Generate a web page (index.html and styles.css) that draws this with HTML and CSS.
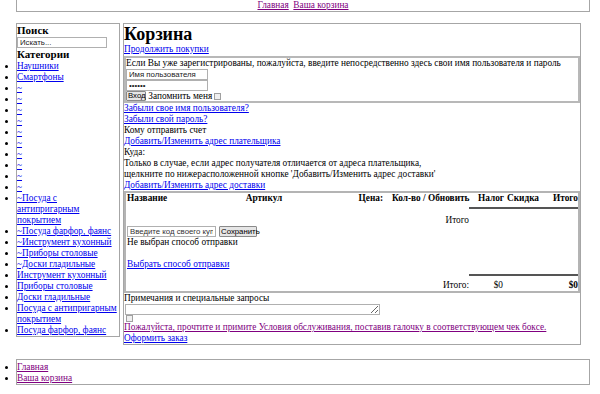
FILE: index.html
```html
<!DOCTYPE html>
<html lang="ru">
<head>
<meta charset="utf-8">
<title>Корзина</title>
<link rel="stylesheet" href="styles.css">
</head>
<body>
<div class="page">
  <div class="topbar"><a class="visited" href="#">Главная</a>&nbsp; <a class="visited" href="#">Ваша корзина</a></div>
  <div class="layout">
    <aside class="sidebar">
      <h3>Поиск</h3>
      <input class="search" type="text" value="Искать...">
      <h3>Категории</h3>
      <ul class="cats">
        <li><a href="#">Наушники</a></li>
        <li><a href="#">Смартфоны</a></li>
        <li><a href="#">~</a></li>
        <li><a href="#">~</a></li>
        <li><a href="#">~</a></li>
        <li><a href="#">~</a></li>
        <li><a href="#">~</a></li>
        <li><a href="#">~</a></li>
        <li><a href="#">~</a></li>
        <li><a href="#">~</a></li>
        <li><a href="#">~</a></li>
        <li><a href="#">~</a></li>
        <li><a href="#">~Посуда с антипригарным покрытием</a></li>
        <li><a href="#">~Посуда фарфор, фаянс</a></li>
        <li><a href="#">~Инструмент кухонный</a></li>
        <li><a href="#">~Приборы столовые</a></li>
        <li><a href="#">~Доски гладильные</a></li>
        <li><a href="#">Инструмент кухонный</a></li>
        <li><a href="#">Приборы столовые</a></li>
        <li><a href="#">Доски гладильные</a></li>
        <li><a href="#">Посуда с антипригарным покрытием</a></li>
        <li><a href="#">Посуда фарфор, фаянс</a></li>
      </ul>
    </aside>
    <main class="content">
      <h1>Корзина</h1>
      <div><a href="#">Продолжить покупки</a></div>
      <div class="login">
        <div>Если Вы уже зарегистрированы, пожалуйста, введите непосредственно здесь свои имя пользователя и пароль</div>
        <input class="field" type="text" value="Имя пользователя">
        <input class="field" type="password" value="123456">
        <div class="login-row"><button class="btn btn-login" type="button">Вход</button> Запомнить меня <input class="chk chk-inline" type="checkbox"></div>
      </div>
      <div><a href="#">Забыли свое имя пользователя?</a></div>
      <div><a href="#">Забыли свой пароль?</a></div>
      <div>Кому отправить счет</div>
      <div><a href="#">Добавить/Изменить адрес плательщика</a></div>
      <div>Куда:</div>
      <div>Только в случае, если адрес получателя отличается от адреса плательщика,</div>
      <div>щелкните по нижерасположенной кнопке 'Добавить/Изменить адрес доставки'</div>
      <div><a href="#">Добавить/Изменить адрес доставки</a></div>
      <div class="cart">
        <div class="th th-name">Название</div>
        <div class="th th-sku">Артикул</div>
        <div class="th th-price">Цена:</div>
        <div class="th th-qty">Кол-во / Обновить</div>
        <div class="th th-tax">Налог</div>
        <div class="th th-disc">Скидка</div>
        <div class="th th-total">Итого</div>
        <div class="rule rule-top"></div>
        <div class="sub-label">Итого</div>
        <div class="wide coupon"><input class="coupon-field" type="text" value="Введите код своего купона"><button class="btn btn-save" type="button">Сохранить</button></div>
        <div class="wide">Не выбран способ отправки</div>
        <div class="wide blank"></div>
        <div class="wide"><a href="#">Выбрать способ отправки</a></div>
        <div class="rule rule-bottom"></div>
        <div class="sub-label">Итого:</div>
        <div class="tax">$0</div>
        <div class="sum">$0</div>
      </div>
      <div>Примечания и специальные запросы</div>
      <textarea class="notes"></textarea>
      <div class="agree-box"><input class="chk" type="checkbox"></div>
      <div><a class="visited" href="#">Пожалуйста, прочтите и примите Условия обслуживания, поставив галочку в соответствующем чек боксе.</a></div>
      <div><a href="#">Оформить заказ</a></div>
    </main>
  </div>
  <ul class="footer">
    <li><a class="visited" href="#">Главная</a></li>
    <li><a class="visited" href="#">Ваша корзина</a></li>
  </ul>
</div>
</body>
</html>
```

FILE: styles.css
```css
* { box-sizing: border-box; }
html, body { margin: 0; background: #fff; }
body {
  font-family: "Liberation Serif", "Times New Roman", serif;
  font-size: 9.3px;
  line-height: 11px;
  color: #000;
}
a { color: #0000ee; text-decoration: underline; }
a.visited { color: #800080; }

.page { padding-left: 16px; }

.topbar {
  width: 574px;
  height: 13px;
  margin-top: -1px;
  border: 1px solid #a6a6a6;
  text-align: center;
}

.layout {
  display: flex;
  align-items: flex-start;
  gap: 3px;
  margin-top: 11px;
}

.sidebar {
  width: 104px;
  border: 1px solid #a6a6a6;
}
.sidebar h3 {
  margin: 0;
  font-size: 11px;
  line-height: 13px;
  font-weight: bold;
}
.cats { margin: 0; padding: 0; list-style: disc outside; }

input, button, textarea {
  font-family: "Liberation Sans", Arial, sans-serif;
  font-size: 7.8px;
  color: #222;
  margin: 0;
}
.search, .field, .coupon-field {
  display: block;
  height: 11px;
  padding: 0 2px;
  border: 1px solid #b0b0b0;
  background: #fff;
  outline: none;
}
.search { width: 90px; }

.content {
  width: 458px;
  border: 1px solid #a6a6a6;
}
.content h1 {
  margin: 0;
  font-size: 18px;
  line-height: 20px;
  font-weight: bold;
}

.login {
  margin-top: 1px;
  border: 2px solid #b8b8b8;
}
.field { width: 82px; }
.login-row { height: 10px; line-height: 10px; }
.btn {
  display: inline-block;
  vertical-align: top;
  height: 10px;
  padding: 0 1px;
  line-height: 8px;
  border: 1px solid #8a8a8a;
  border-radius: 1px;
  background: #e6e6e6;
  color: #000;
}
.btn-login { width: 20px; }
.chk {
  appearance: none;
  -webkit-appearance: none;
  width: 7px;
  height: 7px;
  border: 1px solid #a0a0a0;
  background: #f0f0f0;
  margin: 0;
}
.chk-inline { display: inline-block; vertical-align: top; margin-top: 2px; }

.cart {
  display: grid;
  grid-template-columns: 114px 48px 100px 81px 36px 40px 33px;
  border: 2px solid #b4b4b4;
}
.th { font-weight: bold; white-space: nowrap; height: 11px; }
.th-name { padding-left: 1px; }
.th-sku { text-align: center; }
.th-price { text-align: right; padding-right: 5px; }
.th-qty { padding-left: 4px; }
.th-tax { padding-left: 9px; }
.th-disc { padding-left: 2px; }
.th-total { text-align: right; }

.rule { grid-column: 5 / 8; }
.rule::before { content: ""; display: block; height: 2px; background: #555; }
.rule-top { height: 11px; padding-top: 3px; }
.rule-bottom { height: 10px; padding-top: 4px; }

.sub-label { grid-column: 1 / 5; text-align: right; height: 11px; }
.wide { grid-column: 1 / -1; height: 11px; padding-left: 1px; }
.coupon { display: flex; align-items: flex-start; }
.coupon-field { width: 89px; color: #333; }
.btn-save { width: 38px; height: 11px; margin-left: 3px; }
.tax { grid-column: 5; text-align: right; padding-right: 2px; }
.sum { grid-column: 7; text-align: right; font-weight: bold; }

.notes {
  display: block;
  width: 255px;
  height: 11px;
  margin-left: 1px;
  padding: 0;
  border: 1px solid #b0b0b0;
  resize: both;
}
.agree-box { height: 7px; padding-left: 2px; }
.agree-box .chk { display: block; }

.footer {
  width: 574px;
  margin: 14px 0 0;
  padding: 2px 0 0;
  height: 26px;
  border: 1px solid #a6a6a6;
  list-style: disc outside;
}
```
